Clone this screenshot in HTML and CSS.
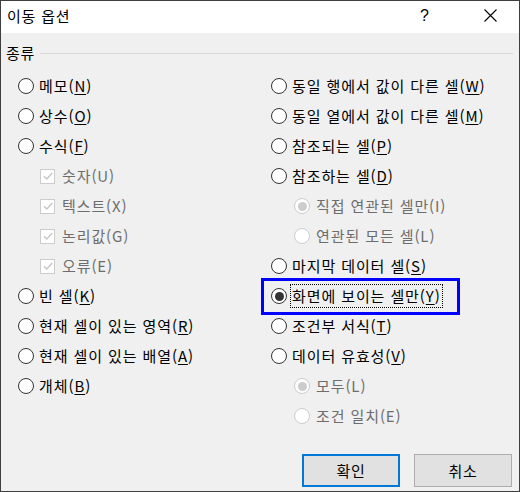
FILE: index.html
```html
<!DOCTYPE html>
<html lang="ko">
<head>
<meta charset="utf-8">
<title>이동 옵션</title>
<link rel="stylesheet" href="styles.css">
</head>
<body>
<div class="dialog">
  <div class="titlebar">
    <span class="title">이동 옵션</span>
    <span class="help">?</span>
    <span class="close">
      <svg width="13" height="13" viewBox="0 0 13 13"><path d="M0.5 0.5 L12.5 12.5 M12.5 0.5 L0.5 12.5" stroke="#000" stroke-width="1.1" fill="none"/></svg>
    </span>
  </div>
  <div class="body">
    <div class="group-title"><span>종류</span><span class="rule"></span></div>
    <div class="options">
      <div class="col">
        <div class="opt"><span class="radio"></span><span class="lbl">메모(<u>N</u>)</span></div>
        <div class="opt"><span class="radio"></span><span class="lbl">상수(<u>O</u>)</span></div>
        <div class="opt"><span class="radio"></span><span class="lbl">수식(<u>F</u>)</span></div>
        <div class="opt sub-check disabled"><span class="check"><svg width="12" height="12" viewBox="0 0 12 12"><path d="M2 6.2 L4.8 9 L10.2 3" stroke="#c6c6c6" stroke-width="1.4" fill="none"/></svg></span><span class="lbl">숫자(U)</span></div>
        <div class="opt sub-check disabled"><span class="check"><svg width="12" height="12" viewBox="0 0 12 12"><path d="M2 6.2 L4.8 9 L10.2 3" stroke="#c6c6c6" stroke-width="1.4" fill="none"/></svg></span><span class="lbl">텍스트(X)</span></div>
        <div class="opt sub-check disabled"><span class="check"><svg width="12" height="12" viewBox="0 0 12 12"><path d="M2 6.2 L4.8 9 L10.2 3" stroke="#c6c6c6" stroke-width="1.4" fill="none"/></svg></span><span class="lbl">논리값(G)</span></div>
        <div class="opt sub-check disabled"><span class="check"><svg width="12" height="12" viewBox="0 0 12 12"><path d="M2 6.2 L4.8 9 L10.2 3" stroke="#c6c6c6" stroke-width="1.4" fill="none"/></svg></span><span class="lbl">오류(E)</span></div>
        <div class="opt"><span class="radio"></span><span class="lbl">빈 셀(<u>K</u>)</span></div>
        <div class="opt"><span class="radio"></span><span class="lbl">현재 셀이 있는 영역(<u>R</u>)</span></div>
        <div class="opt"><span class="radio"></span><span class="lbl">현재 셀이 있는 배열(<u>A</u>)</span></div>
        <div class="opt"><span class="radio"></span><span class="lbl">개체(<u>B</u>)</span></div>
      </div>
      <div class="col">
        <div class="opt"><span class="radio"></span><span class="lbl">동일 행에서 값이 다른 셀(<u>W</u>)</span></div>
        <div class="opt"><span class="radio"></span><span class="lbl">동일 열에서 값이 다른 셀(<u>M</u>)</span></div>
        <div class="opt"><span class="radio"></span><span class="lbl">참조되는 셀(<u>P</u>)</span></div>
        <div class="opt"><span class="radio"></span><span class="lbl">참조하는 셀(<u>D</u>)</span></div>
        <div class="opt sub-radio disabled"><span class="radio checked"></span><span class="lbl">직접 연관된 셀만(I)</span></div>
        <div class="opt sub-radio disabled"><span class="radio"></span><span class="lbl">연관된 모든 셀(L)</span></div>
        <div class="opt"><span class="radio"></span><span class="lbl">마지막 데이터 셀(<u>S</u>)</span></div>
        <div class="opt highlighted"><span class="radio checked"></span><span class="lbl focus">화면에 보이는 셀만(<u>Y</u>)</span></div>
        <div class="opt"><span class="radio"></span><span class="lbl">조건부 서식(<u>T</u>)</span></div>
        <div class="opt"><span class="radio"></span><span class="lbl">데이터 유효성(<u>V</u>)</span></div>
        <div class="opt sub-radio disabled"><span class="radio checked"></span><span class="lbl">모두(L)</span></div>
        <div class="opt sub-radio disabled"><span class="radio"></span><span class="lbl">조건 일치(E)</span></div>
      </div>
    </div>
    <div class="buttons">
      <button class="btn default">확인</button>
      <button class="btn">취소</button>
    </div>
  </div>
</div>
</body>
</html>
```

FILE: styles.css
```css
*, *::before, *::after { box-sizing: border-box; }
html, body { margin: 0; padding: 0; }
body {
  width: 520px;
  height: 492px;
  font-family: "Noto Sans CJK KR", "Noto Sans", sans-serif;
  font-size: 15px;
  color: #000;
  background: #f0f0f0;
}
.dialog {
  width: 520px;
  height: 492px;
  border: 1px solid #3f3f3f;
  display: flex;
  flex-direction: column;
  background: #f0f0f0;
}
.titlebar {
  height: 32px;
  flex: none;
  background: #fff;
  display: flex;
  align-items: center;
  position: relative;
  padding-left: 6px;
}
.title {
  font-size: 15px;
  line-height: 20px;
  letter-spacing: 0.8px;
  margin-top: -2px;
}
.help {
  margin-left: auto;
  width: 14px;
  font-family: "Liberation Sans", sans-serif;
  font-size: 16px;
  line-height: 20px;
  margin-top: -3px;
  margin-right: 50px;
}
.close {
  width: 13px;
  height: 13px;
  margin-right: 22px;
  margin-top: -4px;
  display: flex;
}
.body {
  flex: 1;
  display: flex;
  flex-direction: column;
  padding: 10px 6px 4px 5px;
}
.group-title {
  height: 20px;
  display: flex;
  align-items: center;
  line-height: 20px;
  letter-spacing: 0.8px;
}
.group-title .rule {
  flex: 1;
  height: 1px;
  background: #d9d9d9;
  margin-left: 5px;
  margin-top: 1px;
}
.options {
  margin-top: 8px;
  padding-left: 12px;
  display: grid;
  grid-template-columns: 253px 1fr;
}
.col {
  display: flex;
  flex-direction: column;
}
.opt {
  height: 30px;
  display: flex;
  align-items: center;
  position: relative;
}
.lbl {
  line-height: 20px;
  white-space: nowrap;
  letter-spacing: 0.9px;
}
.lbl u { text-decoration-thickness: 1px; text-underline-offset: 2px; }
.radio {
  width: 16px;
  height: 16px;
  border: 1px solid #333;
  border-radius: 50%;
  background: #fff;
  flex: none;
  margin-right: 5px;
  position: relative;
}
.radio.checked::after {
  content: "";
  position: absolute;
  left: 2.5px;
  top: 2.5px;
  width: 9px;
  height: 9px;
  border-radius: 50%;
  background: #333;
}
.disabled { color: #6d6d6d; }
.disabled .radio { border-color: #cccccc; }
.disabled .radio.checked::after { background: #cccccc; }
.sub-radio { padding-left: 23px; }
.sub-radio .radio { margin-right: 6px; }
.sub-check { padding-left: 22px; }
.check {
  width: 15px;
  height: 15px;
  border: 1px solid #cccccc;
  background: #fff;
  flex: none;
  margin-right: 7px;
  display: flex;
  align-items: center;
  justify-content: center;
}
.highlighted::after {
  content: "";
  position: absolute;
  left: -10px;
  top: -3px;
  width: 199px;
  height: 37px;
  border: 3px solid #0000ff;
}
.focus {
  outline: 1px dotted #000;
  outline-offset: 1px;
}
.buttons {
  margin-top: auto;
  display: flex;
  justify-content: flex-end;
  gap: 14px;
  padding-right: 1px;
}
.btn {
  width: 98px;
  height: 33px;
  font-family: "Noto Sans CJK KR", "Noto Sans", sans-serif;
  font-size: 15px;
  letter-spacing: 0.8px;
  background: #e1e1e1;
  border: 1px solid #adadad;
  color: #000;
  padding: 0;
  margin: 0;
}
.btn.default {
  border: 2px solid #0078d7;
}
```
